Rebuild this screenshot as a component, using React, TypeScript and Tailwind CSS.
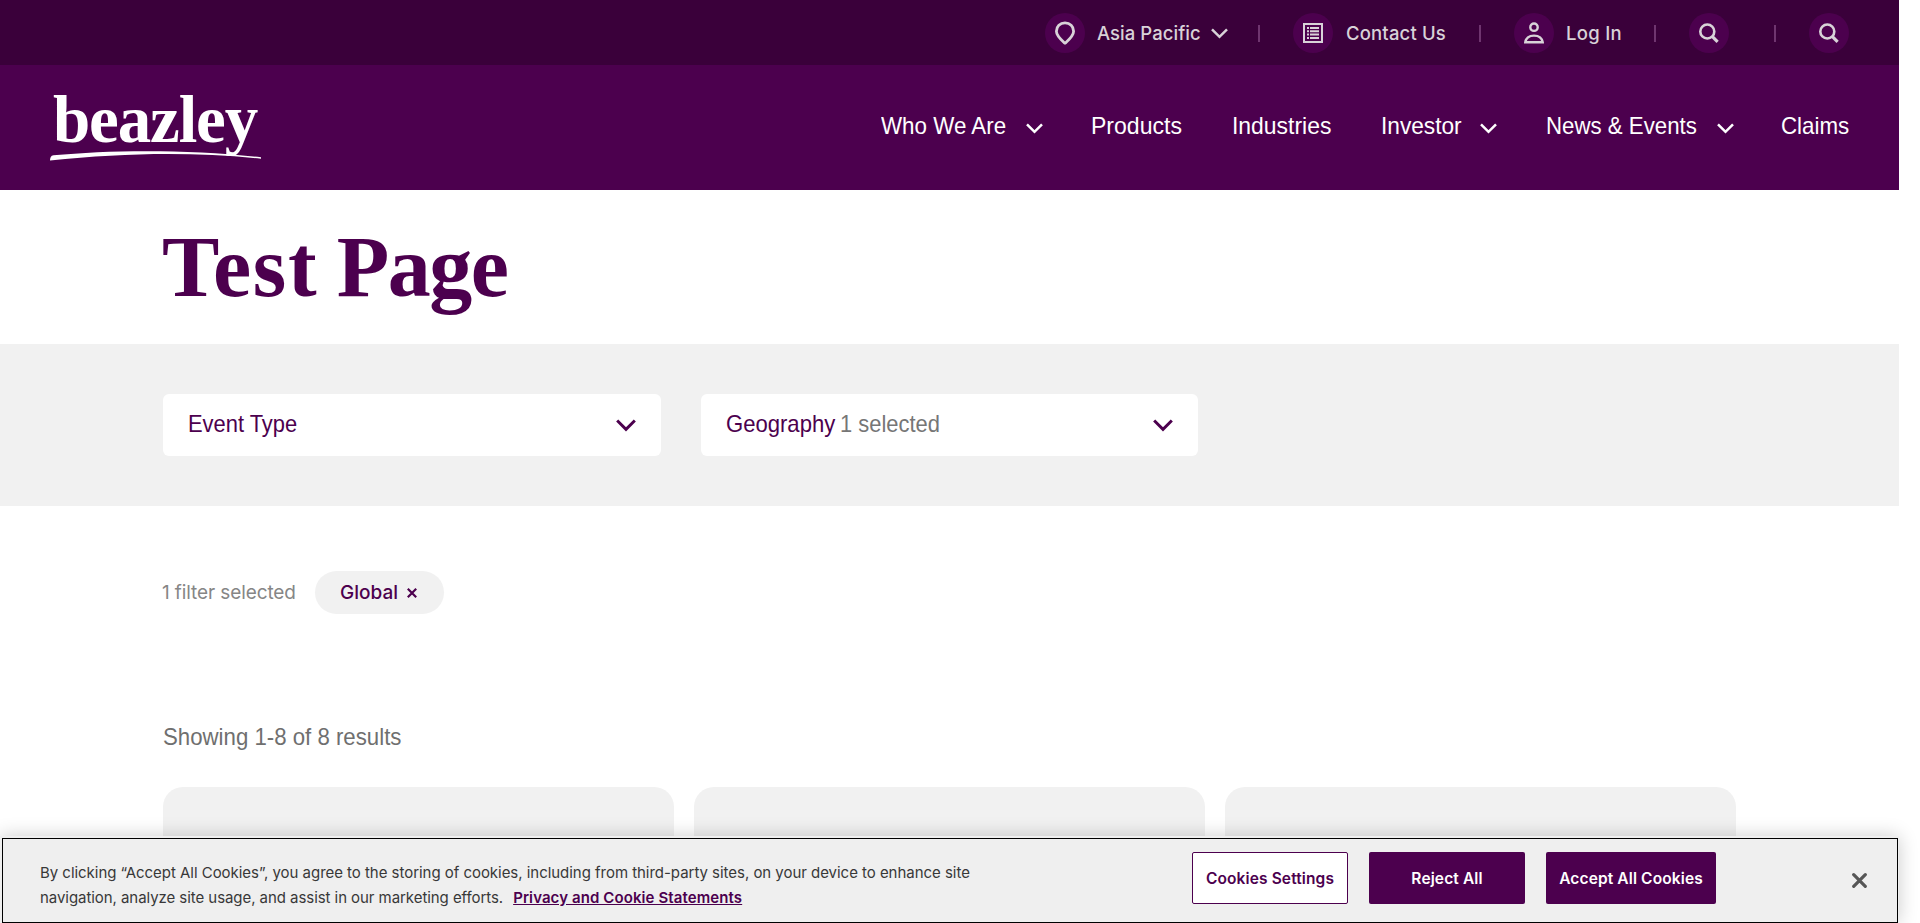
import type { ReactNode } from "react";

const SANS = "font-['Liberation_Sans',Arial,sans-serif]";
const INTER = "font-['Inter','Liberation_Sans',sans-serif]";
const SERIF = "font-['Liberation_Serif','Times_New_Roman',serif]";

function Chevron({ className }: { className: string }) {
  return (
    <svg viewBox="0 0 17 11" className={className} fill="none" stroke="currentColor" strokeWidth="2.5">
      <path d="M1 1.3 8.5 8.8 16 1.3" />
    </svg>
  );
}

function Circle({ gap, children }: { gap?: string; children: ReactNode }) {
  return (
    <span className={`flex size-10 shrink-0 items-center justify-center rounded-full bg-[#4c004e] ${gap ?? ""}`}>
      {children}
    </span>
  );
}

function Divider({ className }: { className: string }) {
  return <span className={`h-[17px] w-[2px] shrink-0 bg-[#6f356f] ${className}`} />;
}

function SearchIcon() {
  return (
    <svg viewBox="0 0 20 20" className="size-5" fill="none" stroke="currentColor" strokeWidth="2.6">
      <circle cx="8.3" cy="8.5" r="7" />
      <path d="m13.2 13.4 5.400 5.400" strokeWidth="3.2" />
    </svg>
  );
}

function PinIcon() {
  return (
    <svg viewBox="0 0 22 24" className="h-6 w-[22px]" fill="none" stroke="currentColor" strokeWidth="2.8">
      <path d="M11 1.900c-5 0-8.600 3.600-8.600 8.300 0 4.600 4.200 8 8.600 12.100 4.400-4.100 8.600-7.500 8.600-12.100 0-4.700-3.600-8.300-8.600-8.300Z" strokeLinejoin="round" />
    </svg>
  );
}

function ListIcon() {
  return (
    <svg viewBox="0 0 20 20" className="size-5" fill="currentColor">
      <path fillRule="evenodd" d="M0 0h20v20H0ZM2 2v16h16V2Z" />
      <path d="M4 4h2v2H4zM4 7.300h2v2H4zM4 10.600h2v2H4zM4 14h2v2H4zM7 4h9v2H7zM7 7.300h9v2H7zM7 10.600h9v2H7zM7 14h9v2H7z" />
    </svg>
  );
}

function UserIcon() {
  return (
    <svg viewBox="0 0 20 22" className="h-[22px] w-5" fill="none" stroke="currentColor" strokeWidth="2.4">
      <circle cx="10" cy="5.200" r="3.700" />
      <path d="M1.300 20.300h17.400c-.7-4.500-4.300-6.700-8.700-6.700s-8 2.200-8.700 6.700Z" />
    </svg>
  );
}

function TopBar() {
  return (
    <div className={`flex h-[65px] items-center bg-[#3a003a] pt-px pl-[1045px] text-[18.5px] leading-6 font-medium text-[#d8d2d8] ${INTER}`}>
      <Circle><PinIcon /></Circle>
      <span className="-mt-px ml-3 w-[104px] shrink-0 tracking-[0.05px] whitespace-nowrap">Asia Pacific</span>
      <Chevron className="ml-[10px] h-[11px] w-[17px]" />
      <Divider className="ml-[30px]" />
      <Circle gap="ml-[33px]"><ListIcon /></Circle>
      <span className="-mt-px ml-[13px] w-[101px] shrink-0 tracking-[0.16px] whitespace-nowrap">Contact Us</span>
      <Divider className="ml-8" />
      <Circle gap="ml-[33px]"><UserIcon /></Circle>
      <span className="-mt-px ml-3 w-[57px] shrink-0 tracking-[0.3px] whitespace-nowrap">Log In</span>
      <Divider className="ml-[31px]" />
      <Circle gap="ml-[33px]"><SearchIcon /></Circle>
      <Divider className="ml-[45px]" />
      <Circle gap="ml-[33px]"><SearchIcon /></Circle>
    </div>
  );
}

const NAV = [
  { label: "Who We Are", item: "w-[210px]", text: "w-[145px]", scale: "scale-x-[0.932]", menu: true },
  { label: "Products", item: "w-[141px]", text: "w-[100px]", scale: "scale-x-[0.96]", menu: false },
  { label: "Industries", item: "w-[148.5px]", text: "w-[110px]", scale: "scale-x-[0.955]", menu: false },
  { label: "Investor", item: "w-[165px]", text: "w-[99.5px]", scale: "scale-x-[0.945]", menu: true },
  { label: "News & Events", item: "w-[235.5px]", text: "w-[171px]", scale: "scale-x-[0.927]", menu: true },
  { label: "Claims", item: "w-[80px]", text: "w-[80px]", scale: "scale-x-[0.93]", menu: false },
];

function Logo() {
  return (
    <div className="ml-[50px] flex h-[75px] w-[212px] flex-col">
      <span className={`-mt-px h-[61px] pl-[3px] text-[67px] leading-[60px] font-bold tracking-[-1.150px] ${SERIF}`}>beazley</span>
      <svg viewBox="0 0 212 12" className="h-3 w-[212px]" fill="currentColor">
        <path d="M0 10.600C0 8 .8 5.600 3.500 5.300 60-.2 140-.8 211 7.200v1.500C145 1.800 75 2.500 0 10.600Z" />
      </svg>
    </div>
  );
}

function MainNav() {
  return (
    <header className="flex h-[125px] items-start bg-[#4c004e] text-white">
      <div className="w-[881px] shrink-0 pt-[25px]"><Logo /></div>
      <nav className={`flex pt-[46px] text-2xl leading-[30px] ${SANS}`}>
        {NAV.map((n) => (
          <a key={n.label} className={`flex shrink-0 items-center ${n.item}`}>
            <span className={`${n.text} shrink-0`}>
              <span className={`inline-block origin-left whitespace-nowrap ${n.scale}`}>{n.label}</span>
            </span>
            {n.menu && <Chevron className="mt-[4px] h-[11px] w-[17px]" />}
          </a>
        ))}
      </nav>
    </header>
  );
}

function Filters() {
  return (
    <section className={`flex h-[162px] items-center gap-10 bg-[#f1f1f1] pl-[163px] text-2xl text-[#4c004e] ${SANS}`}>
      <button className="flex h-[62px] w-[498px] items-center justify-between rounded-[6px] bg-white pr-[25px] pl-[24.5px]">
        <span className="-mt-[2px] inline-block origin-left scale-x-[0.912]">Event Type</span>
        <Chevron className="h-[13px] w-5" />
      </button>
      <button className="flex h-[62px] w-[497px] items-center rounded-[6px] bg-white pr-[25px] pl-[25px]">
        <span className="-mt-[2px] w-[114px]"><span className="inline-block origin-left scale-x-[0.92]">Geography</span></span>
        <span className="-mt-[2px] text-[#767676]"><span className="inline-block origin-left scale-x-[0.913] whitespace-nowrap">1 selected</span></span>
        <Chevron className="ml-auto h-[13px] w-5" />
      </button>
    </section>
  );
}

function CookieBanner() {
  return (
    <div className={`absolute bottom-0 left-0 flex h-[87px] w-[1899px] bg-[#efefef] shadow-[0_0_18px_rgba(0,0,0,0.2)] ${INTER}`}>
      <div className="mt-[2px] mr-px ml-[2px] flex flex-1 items-start border border-black">
        <p className="mt-[21px] ml-[37px] w-[1151px] shrink-0 text-[15px] leading-[25px] tracking-[-0.035px] whitespace-nowrap text-[#383838]">
          By clicking “Accept All Cookies”, you agree to the storing of cookies, including from third-party sites, on your device to enhance site
          <br />
          <span className="tracking-[-0.06px]">navigation, analyze site usage, and assist in our marketing efforts.</span>
          <a className="ml-[10px] font-semibold tracking-[0.1px] text-[#4c004e] underline">Privacy and Cookie Statements</a>
        </p>
        <div className="mt-[13px] ml-px flex gap-[21px] text-[15.5px] font-semibold tracking-[0.12px]">
          <button className="h-[52px] w-[156px] rounded-[2px] border border-[#4c004e] bg-white pt-px text-[#4c004e]">Cookies Settings</button>
          <button className="h-[52px] w-[156px] rounded-[2px] bg-[#4c004e] pt-px text-white">Reject All</button>
          <button className="h-[52px] w-[170px] rounded-[2px] bg-[#4c004e] pt-px text-white">Accept All Cookies</button>
        </div>
        <svg viewBox="0 0 15 15" className="mt-[34px] ml-[136px] size-[15px]" stroke="#565656" strokeWidth="3.200" strokeLinecap="round">
          <path d="m1.700 1.700 11.600 11.600M13.300 1.700 1.700 13.300" />
        </svg>
      </div>
    </div>
  );
}

export default function App() {
  return (
    <div className="relative h-[923px] w-[1920px] overflow-hidden bg-white">
      <div className="flex h-full w-[1899px] flex-col">
        <TopBar />
        <MainNav />
        <div className="h-[154px] pl-[162px]">
          <h1 className={`text-[86px] leading-[154px] font-bold text-[#4c004e] ${SERIF}`}>
            <span className="tracking-[1.6px]">Test</span>
            <span className="tracking-[-3px]"> </span>
            <span className="tracking-[-1.5px]">Page</span>
          </h1>
        </div>
        <Filters />
        <div className={`mt-[65px] flex h-[43px] items-center pl-[162px] text-[19px] ${INTER}`}>
          <span className="mt-[2px] w-[153px] tracking-[-0.1px] whitespace-nowrap text-[#868686]">1 filter selected</span>
          <span className="flex h-[43px] w-[129px] items-center rounded-full bg-[#f1f1f1] pl-[25px] font-medium text-[#4c004e]">
            <span className="mt-[2px] w-[67px]">Global</span>
            <svg viewBox="0 0 10 10" className="size-[10px]" stroke="currentColor" strokeWidth="2.200">
              <path d="m.8.8 8.400 8.400M9.200.8.8 9.200" />
            </svg>
          </span>
        </div>
        <p className={`mt-[108px] pl-[163px] text-2xl leading-[30px] text-[#6f6f6f] ${SANS}`}>
          <span className="inline-block origin-left scale-x-[0.926]">Showing 1-8 of 8 results</span>
        </p>
        <div className="mt-[35px] grid w-[1736px] grid-cols-3 gap-5 pl-[163px]">
          <div className="h-[136px] rounded-t-[20px] bg-[#f1f1f1]" />
          <div className="h-[136px] rounded-t-[20px] bg-[#f1f1f1]" />
          <div className="h-[136px] rounded-t-[20px] bg-[#f1f1f1]" />
        </div>
      </div>
      <CookieBanner />
    </div>
  );
}
